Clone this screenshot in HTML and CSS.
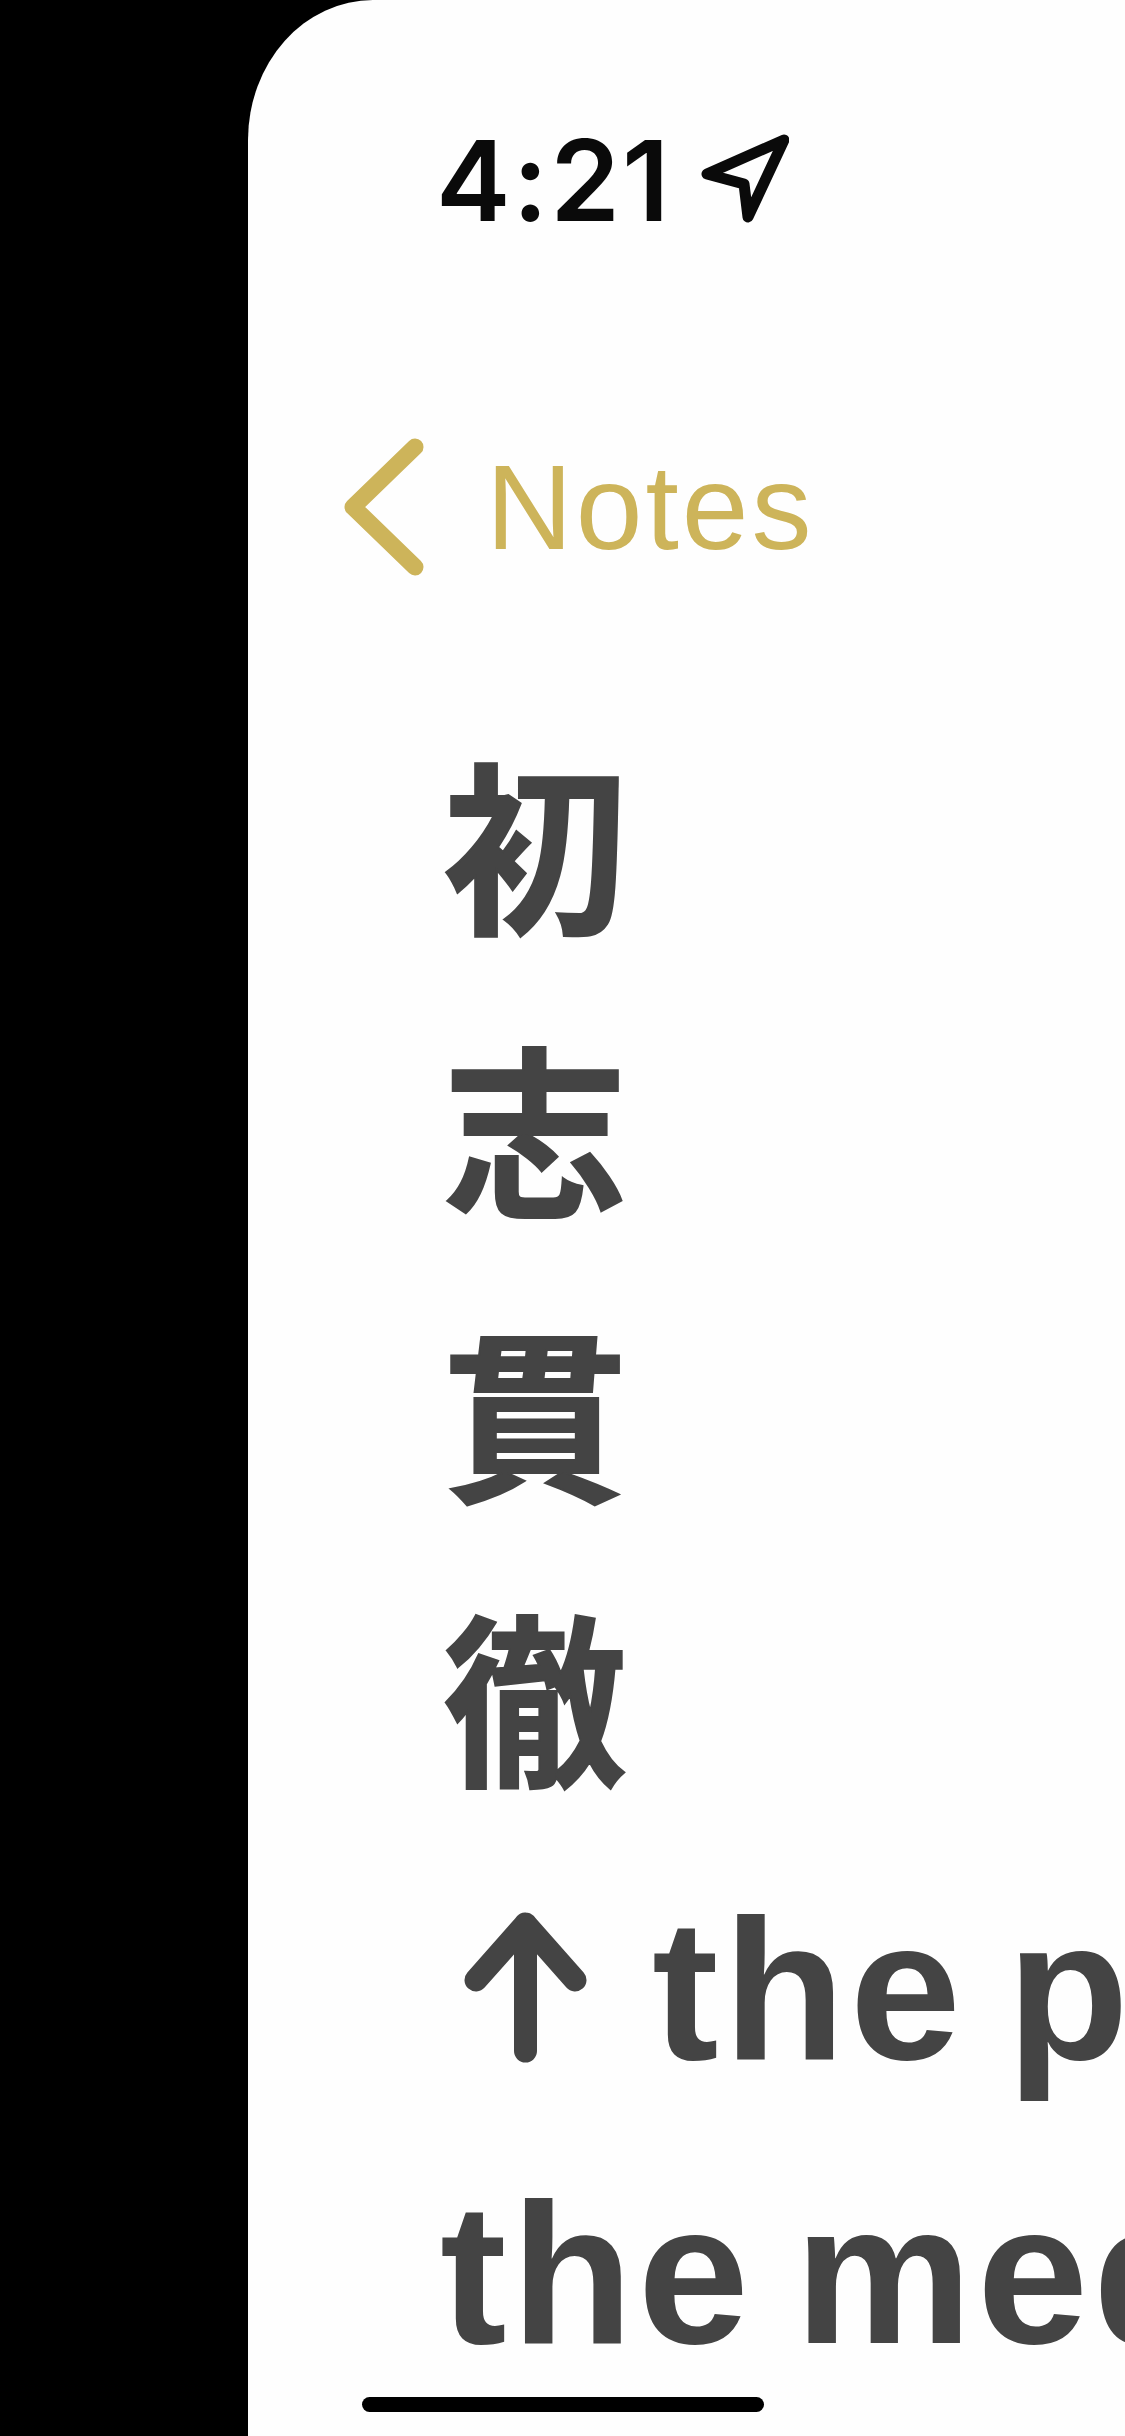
FILE: index.html
```html
<!DOCTYPE html>
<html lang="en">
<head>
<meta charset="utf-8">
<title>Notes</title>
<link rel="stylesheet" href="styles.css">
</head>
<body>
<main class="phone">
  <header class="status">
    <span class="time">4:21</span>
    <svg class="loc" viewBox="0 0 88 89" aria-hidden="true"><path d="M83 6 L6 40 L43 50 L47 83 Z"/></svg>
  </header>
  <nav class="nav">
    <svg class="chev" viewBox="0 0 80 138" aria-hidden="true"><path d="M71 9 L9 69 L71 129"/></svg>
    <span class="back">Notes</span>
  </nav>
  <section class="note">
    <div class="line"><span class="cjk" lang="ja">初</span></div>
    <div class="line"><span class="cjk" lang="ja">志</span></div>
    <div class="line"><span class="cjk" lang="ja">貫</span></div>
    <div class="line"><span class="cjk" lang="ja">徹</span></div>
    <div class="line"><svg class="up" viewBox="0 0 123 151" role="img" aria-label="↑"><path d="M61.5 139 V12 M12 68 L61.5 12 L111 68"/></svg> the p</div>
    <div class="line">the med</div>
  </section>
  <div class="home"></div>
</main>
</body>
</html>
```

FILE: styles.css
```css
html, body {
  margin: 0;
  height: 2436px;
  background: #000;
  overflow: hidden;
}
body {
  display: flex;
  padding-left: 248px;
  box-sizing: border-box;
}
.phone {
  position: relative;
  flex: 1;
  min-width: 0;
  height: 2436px;
  overflow: hidden;
  background: #fefefe;
  border-top-left-radius: 125px 140px;
  font-family: "Liberation Sans", "Noto Sans CJK JP", sans-serif;
}
.status {
  display: flex;
  align-items: flex-start;
  gap: 30px;
  padding: 115px 0 0 188px;
  height: 130px;
}
.time {
  font-family: Inter, "Liberation Sans", sans-serif;
  font-size: 112px;
  line-height: 130px;
  font-weight: 600;
  letter-spacing: 2px;
  color: #0a0a0a;
}
.loc {
  width: 88px;
  height: 89px;
  margin-top: 19px;
  flex: none;
}
.loc path {
  fill: none;
  stroke: #0a0a0a;
  stroke-width: 11;
  stroke-linejoin: round;
}
.nav {
  display: flex;
  align-items: center;
  gap: 62px;
  margin-top: 192px;
  padding-left: 96px;
  height: 140px;
  color: #cdb45a;
}
.chev {
  width: 80px;
  height: 138px;
  flex: none;
}
.chev path {
  fill: none;
  stroke: currentColor;
  stroke-width: 17;
  stroke-linecap: round;
  stroke-linejoin: round;
}
.back {
  font-size: 120px;
  line-height: 140px;
  letter-spacing: 3px;
}
.note {
  margin-top: 135px;
  padding-left: 192px;
  color: #444;
  font-size: 200px;
  line-height: 284px;
  font-weight: 700;
  letter-spacing: 4.5px;
  word-spacing: -19px;
  white-space: nowrap;
}
.line {
  height: 284px;
}
.cjk {
  position: relative;
  top: -3px;
  margin-left: 3px;
  font-family: "Noto Sans CJK JP", sans-serif;
  font-size: 184px;
  line-height: 1;
  letter-spacing: 0;
  -webkit-text-stroke: 2px #444;
}
.up {
  width: 123px;
  height: 151px;
  margin: 0 24px 0 24px;
  vertical-align: -4px;
}
.up path {
  fill: none;
  stroke: currentColor;
  stroke-width: 23;
  stroke-linecap: round;
  stroke-linejoin: round;
}
.home {
  position: absolute;
  left: 114px;
  top: 2397px;
  width: 402px;
  height: 15px;
  border-radius: 8px;
  background: #000;
}
```
